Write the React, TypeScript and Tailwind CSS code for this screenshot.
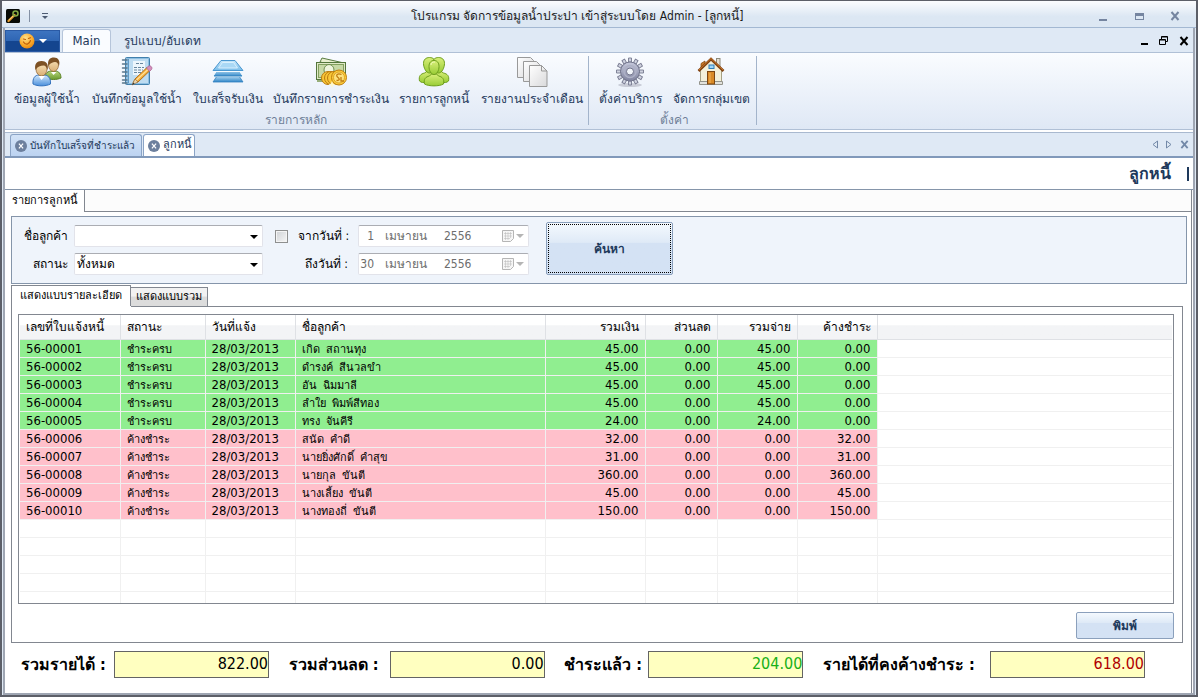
import { useState, type ReactNode } from "react";

function UsersIcon() {
  return (
    <svg viewBox="0 0 32 32" className="size-8" aria-hidden="true">
      <defs>
        <linearGradient id="skin" x1="0" y1="0" x2="0" y2="1">
          <stop offset="0" stopColor="#fbe6bd" />
          <stop offset="1" stopColor="#d9ae73" />
        </linearGradient>
        <linearGradient id="shirtBlue" x1="0" y1="0" x2="0" y2="1">
          <stop offset="0" stopColor="#d3e8fb" />
          <stop offset="1" stopColor="#4a8fdc" />
        </linearGradient>
        <linearGradient id="shirtGreen" x1="0" y1="0" x2="0" y2="1">
          <stop offset="0" stopColor="#b9d67c" />
          <stop offset="1" stopColor="#6a9a2e" />
        </linearGradient>
      </defs>
      <path d="M14 22c0-5 3-7 7-7h3c4 0 6 3 6 7-4 2-11 2-16 0z" fill="url(#shirtGreen)" stroke="#5d8428" />
      <ellipse cx="22.500" cy="9" rx="5" ry="6.500" fill="url(#skin)" stroke="#8a5a26" strokeWidth=".7" />
      <path d="M17.500 10C16 4 19 1.500 23 1.500s6.500 3 5 8.500c-1-3-2-4-4-4s-5 1-6.500 4z" fill="#7d5124" />
      <path d="M20 16l2.500 3 3-3z" fill="#fff" />
      <path d="M2 28c-.5-6 2-9 6-9h5c4 0 7 3 6.500 9-5 2.500-13 2.500-17.500 0z" fill="url(#shirtBlue)" stroke="#3673bd" />
      <ellipse cx="10.500" cy="13" rx="5.500" ry="7" fill="url(#skin)" stroke="#8a5a26" strokeWidth=".7" />
      <path d="M4.500 14C3 8 6 5 10.500 5S18 8 16.500 14c-1-3-2-4.500-4-4.500-3 0-6 1-8 4.500z" fill="#7d5124" />
      <path d="M7.500 20l3 4 3.500-4z" fill="#fff" />
    </svg>
  );
}

function NotebookIcon() {
  return (
    <svg viewBox="0 0 32 32" className="size-8" aria-hidden="true">
      <rect x="4.500" y="1.500" width="24" height="27" rx="1" fill="#8ebfe2" stroke="#4180ad" />
      <rect x="7" y="3" width="20" height="24" fill="#bedcf1" />
      <path d="M7.500 3v24" stroke="#5f9ac6" />
      {[4, 8, 12, 16, 20, 24, 27].map((y) => (
        <path key={y} d={`M1.500 ${y}h4.500`} stroke="#58758a" strokeWidth="1.500" strokeLinecap="round" />
      ))}
      <rect x="12" y="5" width="12" height="14" fill="#edf6fc" />
      <path d="M15 7.500h7M13 11.500h10M13 14h9M13 16.500h8" stroke="#68879f" strokeDasharray="3 1" />
      <path d="M12 27l2-4L26 11.500l3 3L17 26z" fill="#f5ae3a" stroke="#b2701b" />
      <path d="M15.500 24L27.500 13" stroke="#ffe19a" strokeWidth="1.200" />
      <path d="M11 29l3-6 3 3z" fill="#ecd4ab" stroke="#8e6a3b" strokeWidth=".6" />
      <path d="M11 29l1.300-2.500 1.200 1.200z" fill="#333" />
      <path d="M25.500 12l2-2c2-1 4.500 1.500 3 3.500l-2 2z" fill="#d58dbc" stroke="#a5638f" strokeWidth=".7" />
    </svg>
  );
}

function StackIcon() {
  return (
    <svg viewBox="0 0 32 32" className="size-8" aria-hidden="true">
      <defs>
        <linearGradient id="sheet" x1="0" y1="0" x2="0" y2="1">
          <stop offset="0" stopColor="#d5eefc" />
          <stop offset="1" stopColor="#2f86c8" />
        </linearGradient>
        <linearGradient id="sheetTop" x1="0" y1="0" x2="0" y2="1">
          <stop offset="0" stopColor="#c9e8fa" />
          <stop offset="1" stopColor="#79bdea" />
        </linearGradient>
      </defs>
      <path d="M6 18.500h20l5 7.500H1z" fill="url(#sheet)" stroke="#3282c0" strokeWidth=".8" />
      <path d="M6 12.500h20l5 8H1z" fill="url(#sheet)" stroke="#eef8ff" />
      <path d="M2 20h28" stroke="#3282c0" />
      <path d="M9 4.500h14l8 10H1z" fill="url(#sheetTop)" stroke="#4a97d0" />
      <path d="M1 15.500h30" stroke="#f4fbff" />
      <path d="M10.500 6.500h11l4 5.500h-19z" fill="#a9d8f5" stroke="#e4f5ff" strokeWidth=".8" />
    </svg>
  );
}

function MoneyIcon() {
  return (
    <svg viewBox="0 0 32 32" className="size-8" aria-hidden="true">
      <path d="M5 6L7 2l22 5-1 4z" fill="#e8efcf" stroke="#5a7c42" />
      <rect x="1.500" y="6.500" width="29" height="17" fill="#dfe9c6" stroke="#54763c" />
      <rect x="3.500" y="8.500" width="25" height="13" fill="#c7d9a6" stroke="#83a060" />
      <ellipse cx="14" cy="14" rx="5" ry="5.500" fill="#eef4dd" stroke="#6e8f4f" />
      <path d="M2 25h10" stroke="#97ae79" strokeWidth="2" />
      {[13, 16, 19].map((x) => (
        <circle key={x} cx={x} cy="22" r="6.500" fill="#f9c738" stroke="#b97a10" />
      ))}
      <circle cx="24" cy="21.500" r="7.500" fill="#fbcb3a" stroke="#bf7f10" />
      <circle cx="24" cy="21.500" r="5.500" fill="#fde17c" stroke="#d79a1c" strokeWidth=".8" />
      <path d="M26.500 18.500c-4-1.500-6 .5-4 2.500 2 1.500 3 3-1 3.500M26 21v4h3" fill="none" stroke="#c07c10" strokeWidth="1.300" />
      <path d="M17 25l1 2.500 2.500 1-2.500 1-1 2.500-1-2.500-2.500-1 2.500-1z" fill="#fff8cf" />
    </svg>
  );
}

function GroupIcon() {
  return (
    <svg viewBox="0 0 32 32" className="size-8" aria-hidden="true">
      <defs>
        <linearGradient id="lime" x1="0" y1="0" x2="0" y2="1">
          <stop offset="0" stopColor="#d9ef7a" />
          <stop offset="1" stopColor="#98cc35" />
        </linearGradient>
      </defs>
      <g fill="url(#lime)" stroke="#6f9f1e">
        <path d="M1.500 25c-1-5 1-7 5-8l3-2h13l3 2c4 1 6 3 5 8-2 2-4 1.500-6 1.500h-17c-2 0-4 .5-6-1.500z" />
        <path d="M5.500 7.500c0-4 2.500-6 6-6s6 2 6 6-2.500 9.500-6 9.500-6-5.500-6-9.500z" />
        <path d="M26.500 7.500c0-4-2.500-6-6-6s-6 2-6 6 2.500 9.500 6 9.500 6-5.500 6-9.500z" />
        <path d="M6.500 28c-1-5 1-7 5-8l2-2h5l2 2c4 1 6 3 5 8-4 2.500-15 2.500-19 0z" />
        <path d="M11 10.500c0-4 2-6 5-6s5 2 5 6-2 8-5 8-5-4-5-8z" />
      </g>
      <path d="M13 9c0-2 1.500-3 4-3" fill="none" stroke="#f0fabb" />
    </svg>
  );
}

function PagesIcon() {
  return (
    <svg viewBox="0 0 32 32" className="size-8" aria-hidden="true">
      <defs>
        <linearGradient id="paper" x1="0" y1="0" x2="1" y2="1">
          <stop offset="0" stopColor="#ffffff" />
          <stop offset="1" stopColor="#d9d9db" />
        </linearGradient>
      </defs>
      <g fill="url(#paper)" stroke="#999">
        <path d="M1.500 1.500h13l3 3v17h-16z" />
        <path d="M7.500 5.500h13l3 3v17h-16z" />
        <path d="M13.500 9.500h12l5.500 5.500v15.500h-17.500z" />
        <path d="M25.500 9.500v5.500h5.500z" />
      </g>
    </svg>
  );
}

function GearIcon() {
  return (
    <svg viewBox="0 0 32 32" className="size-8" aria-hidden="true">
      <defs>
        <linearGradient id="steel" x1="0" y1="0" x2="0" y2="1">
          <stop offset="0" stopColor="#c6c9dc" />
          <stop offset="1" stopColor="#8184a0" />
        </linearGradient>
      </defs>
      <ellipse cx="16" cy="29" rx="12" ry="2" fill="#c9ccd7" />
      {[0, 30, 60, 90, 120, 150, 180, 210, 240, 270, 300, 330].map((angle) => (
        <path key={angle} d="M14.500 6V2h3v4z" fill="#d0d3e0" stroke="#777a90" strokeWidth=".9" transform={`rotate(${angle} 16 15.500)`} />
      ))}
      <circle cx="16" cy="15.500" r="9.500" fill="url(#steel)" stroke="#73768d" />
      <circle cx="16" cy="15.500" r="6" fill="none" stroke="#aeb1c6" strokeWidth="1.500" />
      <circle cx="16" cy="15.500" r="3.500" fill="#f1f4fa" stroke="#73768d" />
    </svg>
  );
}

function HouseIcon() {
  return (
    <svg viewBox="0 0 32 32" className="size-8" aria-hidden="true">
      <rect x="21.500" y="2.500" width="3.500" height="8" fill="#e4e0d4" stroke="#8e8a7a" />
      <path d="M6 7.500l4-2.500v6l-4 3z" fill="#c87929" stroke="#86501a" strokeWidth=".8" />
      <path d="M5.500 13L16 3l10.500 10v13.500h-21z" fill="#f3f0da" stroke="#a5a184" />
      <path d="M4.500 25.500h23v3h-23z" fill="#e2e2dc" stroke="#94948c" />
      <path d="M3.500 15L16 3l12.500 12" fill="none" stroke="#80410f" strokeWidth="2.600" />
      <path d="M4 14L16 2.500 28 14" fill="none" stroke="#c9772b" strokeWidth="1" />
      <rect x="14" y="9" width="5" height="3.500" fill="#9fd6f7" stroke="#2e7cb8" />
      <rect x="12.500" y="15.500" width="7" height="12.500" fill="#d98a26" stroke="#7c4611" />
      <path d="M15 17v10" stroke="#f2b45d" />
    </svg>
  );
}

function AppIcon() {
  return (
    <svg viewBox="0 0 14 14" className="size-[14px]" aria-hidden="true">
      <rect width="14" height="14" rx="1.500" fill="#070a06" />
      <path d="M2.500 12L8.500 6" stroke="#e39b2e" strokeWidth="2.400" strokeLinecap="round" />
      <circle cx="9.500" cy="4.500" r="2.500" fill="none" stroke="#82a843" strokeWidth="1.600" />
      <path d="M3 11l4-4" stroke="#ffe18a" strokeWidth=".7" />
    </svg>
  );
}

function SmileIcon() {
  return (
    <svg viewBox="0 0 16 16" className="size-4" aria-hidden="true">
      <defs>
        <radialGradient id="sun" cx=".4" cy=".3" r=".8">
          <stop offset="0" stopColor="#ffe08a" />
          <stop offset=".6" stopColor="#fba928" />
          <stop offset="1" stopColor="#e07c0e" />
        </radialGradient>
      </defs>
      <circle cx="8" cy="8" r="7.500" fill="url(#sun)" />
      <path d="M4.500 9c2 3.500 6 2.500 7-1.500M4.500 6l2 .5M9.500 5.500l2-.8" fill="none" stroke="#c0600a" strokeWidth="1.200" strokeLinecap="round" />
    </svg>
  );
}

function Cross({ className }: { className: string }) {
  return (
    <svg viewBox="0 0 10 10" className={className} aria-hidden="true">
      <path d="M1.500 1l7 8M8.500 1l-7 8" fill="none" stroke="currentColor" strokeWidth="2" />
    </svg>
  );
}

function DownArrow({ className }: { className: string }) {
  return (
    <svg viewBox="0 0 8 4" className={className} aria-hidden="true">
      <path d="M0 0h8L4 4z" fill="currentColor" />
    </svg>
  );
}

function RibbonButton({ icon, label, width }: { icon: ReactNode; label: string; width: string }) {
  return (
    <button type="button" className={`flex flex-col items-center whitespace-nowrap text-[12px] leading-5 text-[#1e395b] ${width}`}>
      {icon}
      <span className="mt-px">{label}</span>
    </button>
  );
}

function RibbonGroup({ title, children }: { title: string; children: ReactNode }) {
  return (
    <section className="flex flex-col border-r border-[#a3b4cb] pr-px">
      <div className="flex">{children}</div>
      <h2 className="mt-[3px] text-center text-[12px] leading-4 text-[#6f7f98]">{title}</h2>
    </section>
  );
}

function Combo({ id, options }: { id: string; options: string[] }) {
  return (
    <div className="relative">
      <select id={id} className="h-[22px] w-full appearance-none rounded-[2px] border border-[#e2e3ea] border-t-[#abadb3] bg-white px-[2px] text-[12px] leading-5 text-black">
        {options.map((option) => (
          <option key={option}>{option}</option>
        ))}
      </select>
      <DownArrow className="pointer-events-none absolute top-[10px] right-[5px] h-1 w-2 text-black" />
    </div>
  );
}

function DatePicker({ id, day }: { id: string; day: string }) {
  const part = "min-w-0 bg-transparent text-[12px] leading-5 text-[#6d6d6d]";
  return (
    <div className="flex h-[22px] w-[171px] items-center rounded-[2px] border border-[#e2e3ea] border-t-[#abadb3] bg-white pr-1">
      <input id={id} disabled defaultValue={day} className={`w-[15px] text-right ${part}`} />
      <input aria-label="เดือน" disabled defaultValue="เมษายน" className={`ml-[11px] w-[59px] ${part}`} />
      <input aria-label="ปี" disabled defaultValue="2556" className={`w-[40px] ${part}`} />
      <button type="button" disabled aria-label="ปฏิทิน" className="ml-auto flex items-center gap-[2px] text-[#b5b5b5]">
        <svg viewBox="0 0 12 12" className="size-3" aria-hidden="true">
          <path d="M.5.5h11v8l-3 3h-8z" fill="#f6f6f6" stroke="currentColor" />
          <path d="M2 3.500h8M2 6h8M2 8.500h6M3.500 2v8M6 2v8M8.500 2v6" stroke="currentColor" strokeWidth=".5" />
        </svg>
        <DownArrow className="h-1 w-2" />
      </button>
    </div>
  );
}

type Bill = { no: string; paid: boolean; name: string; total: string; settled: string; due: string };

const bills: Bill[] = [
  { no: "56-00001", paid: true, name: "เกิด  สถานทุง", total: "45.00", settled: "45.00", due: "0.00" },
  { no: "56-00002", paid: true, name: "ดำรงค์  สีนวลขำ", total: "45.00", settled: "45.00", due: "0.00" },
  { no: "56-00003", paid: true, name: "อัน  ฉิมมาลี", total: "45.00", settled: "45.00", due: "0.00" },
  { no: "56-00004", paid: true, name: "ลำใย  พิมพ์สีทอง", total: "45.00", settled: "45.00", due: "0.00" },
  { no: "56-00005", paid: true, name: "ทรง  จันคีรี", total: "24.00", settled: "24.00", due: "0.00" },
  { no: "56-00006", paid: false, name: "สนัด  คำดี", total: "32.00", settled: "0.00", due: "32.00" },
  { no: "56-00007", paid: false, name: "นายยิ่งศักดิ์  คำสุข", total: "31.00", settled: "0.00", due: "31.00" },
  { no: "56-00008", paid: false, name: "นายกุล  ขันตี", total: "360.00", settled: "0.00", due: "360.00" },
  { no: "56-00009", paid: false, name: "นางเลี้ยง  ขันตี", total: "45.00", settled: "0.00", due: "45.00" },
  { no: "56-00010", paid: false, name: "นางทองถี่  ขันตี", total: "150.00", settled: "0.00", due: "150.00" },
];

const headings = ["เลขที่ใบแจ้งหนี้", "สถานะ", "วันที่แจ้ง", "ชื่อลูกค้า", "รวมเงิน", "ส่วนลด", "รวมจ่าย", "ค้างชำระ"];

function BillTable() {
  return (
    <div className="h-[290px] overflow-hidden border border-[#828790] bg-white px-px">
      <table className="w-full table-fixed border-collapse text-[12px] leading-[17px] text-black">
        <colgroup>
          <col className="w-[100px]" />
          <col className="w-[85px]" />
          <col className="w-[90px]" />
          <col className="w-[250px]" />
          <col className="w-[100px]" />
          <col className="w-[72px]" />
          <col className="w-[80px]" />
          <col className="w-[80px]" />
          <col />
        </colgroup>
        <thead>
          <tr className="h-6 bg-linear-to-b from-white from-40% to-[#f3f4f6] to-45%">
            {headings.map((heading, i) => (
              <th key={heading} className={`border-r border-b border-[#dfe1e5] px-[6px] pt-[2px] font-normal ${i > 3 ? "text-right" : "text-left"}`}>
                {heading}
              </th>
            ))}
            <td className="border-b border-[#dfe1e5]" />
          </tr>
        </thead>
        <tbody>
          {bills.map((bill) => {
            const cells = [bill.no, bill.paid ? "ชำระครบ" : "ค้างชำระ", "28/03/2013", bill.name, bill.total, "0.00", bill.settled, bill.due];
            return (
              <tr key={bill.no} className="h-[18px]">
                {cells.map((cell, i) => (
                  <td
                    key={i}
                    className={`overflow-hidden border-r border-b border-[#f0f0f0] px-[6px] whitespace-pre ${bill.paid ? "bg-[#90ee90]" : "bg-[#ffc0cb]"} ${i > 3 ? "text-right" : "text-left"} ${i === 1 || i === 3 ? "text-[11px] leading-[19px]" : "text-[13px]"}`}
                  >
                    <div className="h-[17px]">{cell}</div>
                  </td>
                ))}
                <td className="border-b border-[#f0f0f0]" />
              </tr>
            );
          })}
          {[0, 1, 2, 3, 4].map((row) => (
            <tr key={row} className="h-[18px]">
              {headings.map((heading) => (
                <td key={heading} className="border-r border-b border-[#f0f0f0]" />
              ))}
              <td className="border-b border-[#f0f0f0]" />
            </tr>
          ))}
        </tbody>
      </table>
    </div>
  );
}

function Total({ id, label, value, labelWidth, tone }: { id: string; label: string; value: string; labelWidth: string; tone: string }) {
  return (
    <div className="flex items-center">
      <label htmlFor={id} className={`text-[16px] leading-6 font-bold whitespace-nowrap text-black ${labelWidth}`}>
        {label}
      </label>
      <input id={id} readOnly value={value} className={`h-[27px] w-[155px] border border-[#646464] bg-[#ffffc0] pb-[2px] text-right text-[16px] ${tone}`} />
    </div>
  );
}

const raised =
  "rounded-[2px] border border-[#8ba0bc] bg-linear-to-b from-[#f4f9fe] from-0% via-[#dfeaf7] via-38% to-[#d4e2f4] to-40% text-[12px] font-bold text-[#1e395b]";

export default function App() {
  const [ranged, setRanged] = useState(false);

  return (
    <div className="flex min-h-screen flex-col border-2 border-t border-[#5c5f68] bg-[#dfe9f5] font-['DejaVu_Sans_Condensed','Noto_Sans',sans-serif] text-[12px] text-[#1e395b]">
      <header className="flex h-[27px] items-center border-b border-[#a3b8d2] bg-linear-to-b from-[#fbfcfe] to-[#dce7f3] to-60% pr-4 pt-1 pl-1">
        <div className="flex flex-1 items-center">
          <AppIcon />
          <span className="ml-[9px] h-3 w-px bg-[#8390a4]" />
          <button type="button" aria-label="ปรับแต่งแถบเครื่องมือ" className="ml-3 flex flex-col items-center gap-[2px] text-[#4c5b72]">
            <span className="h-px w-[6px] bg-[#4c5b72]" />
            <DownArrow className="h-[3px] w-[6px]" />
          </button>
        </div>
        <h1 className="mr-8 text-[12px] leading-5 whitespace-nowrap text-[#1a1a1a]">โปรแกรม จัดการข้อมูลน้ำประปา เข้าสู่ระบบโดย Admin - [ลูกหนี้]</h1>
        <div className="flex flex-1 justify-end gap-[26px] text-[#7585a0]">
          <button type="button" aria-label="ย่อ" className="flex h-[10px] w-[10px] items-end">
            <span className="h-[2px] w-2 bg-current" />
          </button>
          <button type="button" aria-label="ขยาย" className="h-[7px] w-[9px] self-center border border-t-[3px] border-current" />
          <button type="button" aria-label="ปิด">
            <Cross className="size-[10px]" />
          </button>
        </div>
      </header>

      <div className="mx-px flex grow flex-col border-x-2 border-b-2 border-[#9fa6b3]">
        <nav className="flex h-6 items-end pt-px">
          <button type="button" aria-label="เมนูโปรแกรม" className="flex h-[22px] w-[55px] items-center justify-center gap-1 border border-[#2a5aa5] bg-linear-to-b from-[#3d74c0] from-0% via-[#2f66b4] via-48% to-[#14458f] to-50% text-white">
            <SmileIcon />
            <DownArrow className="h-1 w-2" />
          </button>
          <button type="button" className="ml-[2px] h-[23px] w-[49px] rounded-t-[3px] border border-b-0 border-[#b6c5da] bg-[#fafcff] text-[13px]">
            Main
          </button>
          <button type="button" className="ml-[13px] h-[23px] text-[12px] whitespace-nowrap">
            รูปแบบ/อับเดท
          </button>
          <div className="ml-auto flex h-full items-center gap-[11px] pr-1 text-black">
            <button type="button" aria-label="ย่อเอกสาร" className="flex h-[9px] items-end">
              <span className="h-[2px] w-[7px] bg-black" />
            </button>
            <button type="button" aria-label="คืนขนาดเอกสาร">
              <svg viewBox="0 0 9 9" className="size-[9px]" aria-hidden="true">
                <path d="M2.500 3V.5h6v5H6.500M2.500 1h6M.5 3.500h6v5h-6zM.5 4h6" fill="none" stroke="currentColor" />
              </svg>
            </button>
            <button type="button" aria-label="ปิดเอกสาร">
              <Cross className="size-[10px]" />
            </button>
          </div>
        </nav>

        <div className="flex h-[78px] border-y border-[#b0c0d6] bg-linear-to-b from-[#fafcff] to-[#dfe8f5] pt-[3px] pb-1">
          <RibbonGroup title="รายการหลัก">
            <RibbonButton icon={<UsersIcon />} label="ข้อมูลผู้ใช้น้ำ" width="w-[84px]" />
            <RibbonButton icon={<NotebookIcon />} label="บันทึกข้อมูลใช้น้ำ" width="w-[96px]" />
            <RibbonButton icon={<StackIcon />} label="ใบเสร็จรับเงิน" width="w-[86px]" />
            <RibbonButton icon={<MoneyIcon />} label="บันทึกรายการชำระเงิน" width="w-[120px]" />
            <RibbonButton icon={<GroupIcon />} label="รายการลูกหนี้" width="w-[86px]" />
            <RibbonButton icon={<PagesIcon />} label="รายงานประจำเดือน" width="w-[110px]" />
          </RibbonGroup>
          <div className="w-1" />
          <RibbonGroup title="ตั้งค่า">
            <RibbonButton icon={<GearIcon />} label="ตั้งค่าบริการ" width="w-[74px]" />
            <RibbonButton icon={<HouseIcon />} label="จัดการกลุ่มเขต" width="w-[88px]" />
          </RibbonGroup>
        </div>

        <div className="border-t-2 border-white">
          <div className="flex h-[26px] items-end gap-px border-t border-b-2 border-[#a9b9cf] border-b-[#8199ba] pl-[5px]">
            <div className="flex h-[22px] w-[132px] items-center gap-[3px] rounded-t-[3px] border border-b-0 border-[#8ba4c6] bg-linear-to-b from-[#d3e3f7] to-[#bcd3f1] pl-1">
              <button type="button" aria-label="ปิดแท็บ" className="grid size-3 shrink-0 place-items-center rounded-full bg-[#6c7f9d] text-white">
                <Cross className="size-[6px]" />
              </button>
              <button type="button" className="text-[10px] whitespace-nowrap">บันทึกใบเสร็จที่ชำระแล้ว</button>
            </div>
            <div className="flex h-[22px] w-[52px] items-center gap-[3px] rounded-t-[3px] border border-b-0 border-[#8ba4c6] bg-white pl-1">
              <button type="button" aria-label="ปิดแท็บ" className="grid size-3 shrink-0 place-items-center rounded-full bg-[#6c7f9d] text-white">
                <Cross className="size-[6px]" />
              </button>
              <button type="button" className="text-[11px] whitespace-nowrap">ลูกหนี้</button>
            </div>
            <div className="ml-auto flex h-full items-center gap-2 pr-1 text-[#7389a8]">
              <button type="button" aria-label="แท็บก่อนหน้า">
                <svg viewBox="0 0 6 9" className="h-[9px] w-[6px]" aria-hidden="true">
                  <path d="M5.500 1v7L1 4.500z" fill="none" stroke="currentColor" />
                </svg>
              </button>
              <button type="button" aria-label="แท็บถัดไป">
                <svg viewBox="0 0 6 9" className="h-[9px] w-[6px]" aria-hidden="true">
                  <path d="M.5 1v7L5 4.500z" fill="none" stroke="currentColor" />
                </svg>
              </button>
              <button type="button" aria-label="ปิดแท็บปัจจุบัน">
                <Cross className="size-[9px]" />
              </button>
            </div>
          </div>
        </div>

        <main className="flex grow flex-col bg-white">
          <div className="flex h-8 items-center justify-end gap-4 border-b border-[#8595aa] pr-1">
            <h2 className="text-[16px] leading-6 font-bold">ลูกหนี้</h2>
            <span className="h-[14px] w-[2px] bg-[#1e395b]" />
          </div>
          <div className="flex h-[22px] bg-[#fcfcfc]">
            <button type="button" className="w-20 border-r border-[#828790] bg-white text-[11px] whitespace-nowrap text-black">
              รายการลูกหนี้
            </button>
            <div className="mr-px grow border-r border-b border-[#828790]" />
          </div>

          <div className="mr-px flex grow flex-col border-r border-[#828790] pt-1 pr-1 pl-[6px]">
            <form className="flex h-[68px] items-center border border-[#8595aa] bg-[#eff4fb] text-black" onSubmit={(e) => e.preventDefault()}>
              <div className="grid grid-cols-[56px_189px] items-center gap-x-[6px] gap-y-[6px]">
                <label htmlFor="customer" className="text-right leading-5">ชื่อลูกค้า</label>
                <Combo id="customer" options={["", ...bills.map((bill) => bill.name)]} />
                <label htmlFor="status" className="text-right leading-5">สถานะ</label>
                <Combo id="status" options={["ทั้งหมด", "ชำระครบ", "ค้างชำระ"]} />
              </div>
              <div className="ml-3 grid grid-cols-[13px_50px_171px] items-center gap-x-[10px] gap-y-[6px]">
                <input
                  type="checkbox"
                  aria-label="กำหนดช่วงวันที่"
                  checked={ranged}
                  onChange={(e) => setRanged(e.target.checked)}
                  className="size-[13px] appearance-none border border-[#8e8f8f] bg-linear-to-br from-[#cfd2d6] to-[#f6f6f6] shadow-[inset_0_0_0_1px_#f4f4f4] checked:bg-[#4b6f9c]"
                />
                <label htmlFor="from-day" className="text-right leading-5 whitespace-nowrap">จากวันที่ :</label>
                <DatePicker id="from-day" day="1" />
                <label htmlFor="to-day" className="col-span-2 text-right leading-5">ถึงวันที่ :</label>
                <DatePicker id="to-day" day="30" />
              </div>
              <button type="submit" className={`mt-[5px] ml-[17px] h-[53px] w-[127px] self-start p-px ${raised}`}>
                <span className="grid size-full place-items-center border border-dotted border-black">ค้นหา</span>
              </button>
            </form>

            <div className="mt-px flex h-[21px] items-end">
              <button type="button" className="h-full w-[120px] border border-b-0 border-[#828790] bg-white text-[11px] whitespace-nowrap text-black">
                แสดงแบบรายละเอียด
              </button>
              <button type="button" className="h-[19px] w-[77px] border border-b-0 border-l-0 border-[#828790] bg-linear-to-b from-[#f2f2f2] from-45% to-[#dcdcdc] to-50% text-[11px] whitespace-nowrap text-black">
                แสดงแบบรวม
              </button>
            </div>
            <div className="mr-1 border border-t-0 border-[#828790] px-[6px] pb-[3px]">
              <div className="-mx-[6px] mb-[7px] ml-[113px] border-t border-[#828790]" />
              <div className="pr-[2px]">
                <BillTable />
              </div>
              <div className="flex justify-end pt-2 pr-[2px]">
                <button type="button" className={`h-[27px] w-[98px] ${raised}`}>พิมพ์</button>
              </div>
            </div>

            <div className="mr-[42px] ml-[10px] flex items-center justify-between py-2">
              <Total id="income" label="รวมรายได้ :" value="822.00" labelWidth="w-[93px]" tone="text-black" />
              <Total id="discount" label="รวมส่วนลด :" value="0.00" labelWidth="w-[101px]" tone="text-black" />
              <Total id="paid" label="ชำระแล้ว :" value="204.00" labelWidth="w-[84px]" tone="text-[#18b018]" />
              <Total id="due" label="รายได้ที่คงค้างชำระ :" value="618.00" labelWidth="w-[167px]" tone="text-[#b00000]" />
            </div>
          </div>
        </main>
      </div>
    </div>
  );
}
